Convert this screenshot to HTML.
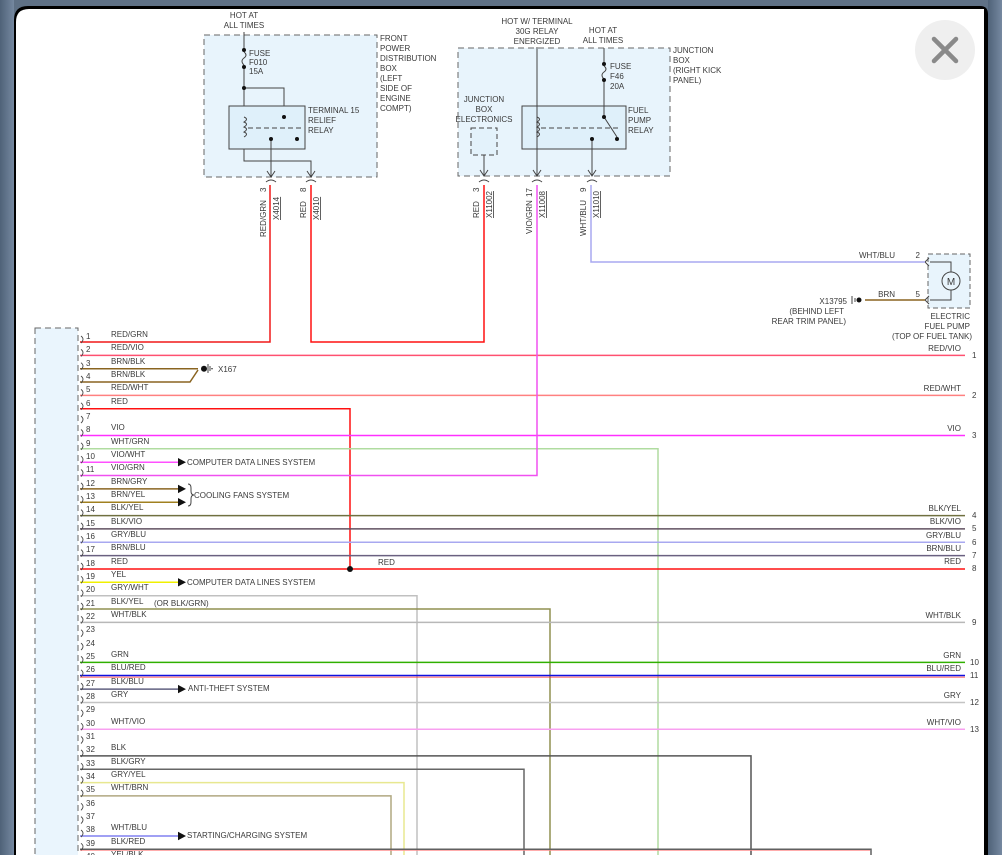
<!DOCTYPE html>
<html><head><meta charset="utf-8"><style>
html,body{margin:0;padding:0;width:1002px;height:855px;overflow:hidden;background:#5f7186;}
svg{display:block}
text{font-family:"Liberation Sans",sans-serif;font-size:8px;fill:#3a3a3a}
</style></head><body>
<svg width="1002" height="855" viewBox="0 0 1002 855" xmlns="http://www.w3.org/2000/svg">
<defs>
<linearGradient id="lg" x1="0" x2="1"><stop offset="0" stop-color="#4f6278"/><stop offset="1" stop-color="#7588a0"/></linearGradient>
</defs>
<rect x="0" y="0" width="14" height="855" fill="url(#lg)"/>
<rect x="988" y="0" width="14" height="855" fill="url(#lg)"/>
<path d="M14,855 V20 Q14,6 28,6 H980 Q988,6 988,14 V855 Z" fill="#000"/>
<path d="M16,855 V22 Q16,9 29,9 H984 V855 Z" fill="#fff"/>
<rect x="984" y="9" width="2" height="846" fill="#000"/>

<circle cx="945" cy="50" r="30" fill="#efefef"/>
<path d="M934,39 L956,61 M956,39 L934,61" stroke="#8a8a8a" stroke-width="4.5" stroke-linecap="round"/>

<rect x="204" y="35" width="173" height="142" fill="#e8f4fc" stroke="#666" stroke-dasharray="6 4"/>
<text x="244" y="18" text-anchor="middle">HOT AT</text>
<text x="244" y="28" text-anchor="middle">ALL TIMES</text>
<g stroke="#444" fill="none" stroke-width="1">
<path d="M244,32 V50 M244,67 V161 H311 V177"/>
<path d="M244,52 q4,3 0,6 q-4,3 0,7"/>
<path d="M244,88 H284 V117 L297,137"/>
<rect x="229" y="106" width="76" height="43" fill="#dff0fa"/>
<path d="M244,117 q5,2 0,5 q5,2 0,5 q5,2 0,5 q5,2 0,5"/>
<path d="M248,128 H302" stroke-dasharray="5 3"/>
<path d="M271,139 V177"/>
<path d="M267,171 L271,177 L275,171 M307,171 L311,177 L315,171"/>
<path d="M266,182 q5,-4 10,0 M306,182 q5,-4 10,0"/>
</g>
<g fill="#111"><circle cx="244" cy="50" r="2"/><circle cx="244" cy="67" r="2"/><circle cx="244" cy="88" r="2"/><circle cx="284" cy="117" r="2"/><circle cx="297" cy="139" r="2"/><circle cx="271" cy="139" r="2"/></g>
<text x="249" y="56">FUSE</text><text x="249" y="65">F010</text><text x="249" y="74">15A</text>
<text x="308" y="113">TERMINAL 15</text><text x="308" y="123">RELIEF</text><text x="308" y="133">RELAY</text>
<text x="380" y="41">FRONT</text><text x="380" y="51">POWER</text><text x="380" y="61">DISTRIBUTION</text><text x="380" y="71">BOX</text><text x="380" y="81">(LEFT</text><text x="380" y="91">SIDE OF</text><text x="380" y="101">ENGINE</text><text x="380" y="111">COMPT)</text>
<g transform="rotate(-90)">
<text x="-192" y="266">3</text><text x="-220" y="279" text-decoration="underline">X4014</text><text x="-237" y="266">RED/GRN</text>
<text x="-192" y="306">8</text><text x="-220" y="319" text-decoration="underline">X4010</text><text x="-218" y="306">RED</text>
<text x="-192" y="479">3</text><text x="-218" y="492" text-decoration="underline">X11002</text><text x="-218" y="479">RED</text>
<text x="-197" y="532">17</text><text x="-218" y="545" text-decoration="underline">X11008</text><text x="-234" y="532">VIO/GRN</text>
<text x="-192" y="586">9</text><text x="-218" y="599" text-decoration="underline">X11010</text><text x="-236" y="586">WHT/BLU</text>
</g>

<rect x="458" y="48" width="212" height="128" fill="#e8f4fc" stroke="#666" stroke-dasharray="6 4"/>
<text x="537" y="24" text-anchor="middle">HOT W/ TERMINAL</text>
<text x="537" y="34" text-anchor="middle">30G RELAY</text>
<text x="537" y="44" text-anchor="middle">ENERGIZED</text>
<text x="603" y="33" text-anchor="middle">HOT AT</text>
<text x="603" y="43" text-anchor="middle">ALL TIMES</text>
<text x="673" y="53">JUNCTION</text><text x="673" y="63">BOX</text><text x="673" y="73">(RIGHT KICK</text><text x="673" y="83">PANEL)</text>
<text x="484" y="102" text-anchor="middle">JUNCTION</text><text x="484" y="112" text-anchor="middle">BOX</text><text x="484" y="122" text-anchor="middle">ELECTRONICS</text>
<g stroke="#444" fill="none" stroke-width="1">
<rect x="471" y="128" width="26" height="27" stroke-dasharray="5 3" fill="#e3f2fb"/>
<path d="M484,155 V176"/>
<rect x="522" y="106" width="104" height="43" fill="#dff0fa"/>
<path d="M537,47 V176"/>
<path d="M537,117 q5,2 0,5 q5,2 0,5 q5,2 0,5 q5,2 0,5"/>
<path d="M541,128 H620" stroke-dasharray="5 3"/>
<path d="M604,48 V64 M604,80 V117 L617,137"/>
<path d="M604,66 q4,3 0,6 q-4,3 0,7"/>
<path d="M592,139 V176"/>
<path d="M480,170 L484,176 L488,170 M533,170 L537,176 L541,170 M588,170 L592,176 L596,170"/>
<path d="M479,182 q5,-4 10,0 M532,182 q5,-4 10,0 M587,182 q5,-4 10,0"/>
</g>
<g fill="#111"><circle cx="604" cy="64" r="2"/><circle cx="604" cy="80" r="2"/><circle cx="604" cy="117" r="2"/><circle cx="617" cy="139" r="2"/><circle cx="592" cy="139" r="2"/></g>
<text x="610" y="69">FUSE</text><text x="610" y="79">F46</text><text x="610" y="89">20A</text>
<text x="628" y="113">FUEL</text><text x="628" y="123">PUMP</text><text x="628" y="133">RELAY</text>

<rect x="928" y="254" width="42" height="54" fill="#e8f4fc" stroke="#666" stroke-dasharray="5 3"/>
<g stroke="#444" fill="none" stroke-width="1">
<path d="M930,262 H951 V272 M951,290 V300 H930"/>
<circle cx="951" cy="281" r="9" fill="#e8f4fc"/>
<path d="M929,258 l-4,4 l4,4 M929,296 l-4,4 l4,4"/>
<path d="M852,296 V304 M855,298 V302"/>
</g>
<text x="951" y="285" text-anchor="middle" style="font-size:10px">M</text>
<circle cx="859" cy="300" r="2.5" fill="#111"/>
<path d="M591,185 V262 H925" stroke="#a8a8f0" stroke-width="1.5" fill="none"/>
<path d="M865,300 H925" stroke="#8a6420" stroke-width="1.5"/>
<text x="895" y="258" text-anchor="end">WHT/BLU</text><text x="920" y="258" text-anchor="end">2</text>
<text x="895" y="297" text-anchor="end">BRN</text><text x="920" y="297" text-anchor="end">5</text>
<text x="847" y="304" text-anchor="end">X13795</text>
<text x="844" y="314" text-anchor="end">(BEHIND LEFT</text>
<text x="846" y="324" text-anchor="end">REAR TRIM PANEL)</text>
<text x="970" y="319" text-anchor="end">ELECTRIC</text>
<text x="970" y="329" text-anchor="end">FUEL PUMP</text>
<text x="972" y="339" text-anchor="end">(TOP OF FUEL TANK)</text>

<rect x="35" y="328" width="43" height="540" fill="#eaf5fd" stroke="#666" stroke-dasharray="6 4"/>

<g fill="none" stroke-width="1.5">
<path d="M311,185 V342 H484 V185" stroke="#ff1010"/>
<path d="M80,342 H270 V185" stroke="#f01818"/>
<path d="M80,355.4 H965" stroke="#ff5070"/>
<path d="M80,368.7 H198" stroke="#8a6420"/>
<path d="M80,382 H190 L198,370" stroke="#8a6420"/>
<path d="M80,395.4 H965" stroke="#ff8080"/>
<path d="M80,408.8 H350 V569" stroke="#ff1010"/>
<path d="M80,435.5 H965" stroke="#ff30ff"/>
<path d="M80,448.8 H658 V855" stroke="#b0dca0"/>
<path d="M80,462.2 H178" stroke="#ff50ff"/>
<path d="M80,475.5 H537 V185" stroke="#f050f0"/>
<path d="M80,488.9 H178" stroke="#8a6420"/>
<path d="M80,502.2 H178" stroke="#a08020"/>
<path d="M80,515.6 H965" stroke="#707040"/>
<path d="M80,528.9 H965" stroke="#605060"/>
<path d="M80,542.3 H965" stroke="#a8a8f0"/>
<path d="M80,555.6 H965" stroke="#6a6080"/>
<path d="M80,569 H965" stroke="#ff1010"/>
<path d="M80,582.3 H178" stroke="#f0f000"/>
<path d="M80,595.7 H417 V855" stroke="#c0c0c0"/>
<path d="M80,609 H550 V855" stroke="#909050"/>
<path d="M80,622.4 H965" stroke="#b8b8b8"/>
<path d="M80,662.4 H965" stroke="#30b000"/>
<path d="M80,675.5 H965" stroke="#1010e0"/>
<path d="M80,689.1 H178" stroke="#606080"/>
<path d="M80,702.5 H965" stroke="#c4c4c4"/>
<path d="M80,729.2 H965" stroke="#f8a0f0"/>
<path d="M80,755.9 H751 V855" stroke="#555"/>
<path d="M80,769.2 H524 V855" stroke="#666"/>
<path d="M80,782.6 H404 V855" stroke="#e8e890"/>
<path d="M80,795.9 H391 V855" stroke="#b0a880"/>
<path d="M80,836 H178" stroke="#8080f0"/>
<path d="M80,849.3 H871 V855" stroke="#606060"/>
</g>
<path d="M80,850.6 H870" stroke="#ff9090" stroke-width="0.8"/>
<path d="M80,677.1 H965" stroke="#ff3030" stroke-width="0.7"/>
<circle cx="350" cy="569" r="3" fill="#111"/>
<circle cx="204" cy="368.7" r="3" fill="#111"/>
<path d="M208,364 V373 M210,366 V371 M213,368.7 H211" stroke="#444"/>
<text x="218" y="372">X167</text>
<g fill="#111">
<path d="M178,458 L186,462.2 L178,466.4Z"/>
<path d="M178,484.7 L186,488.9 L178,493.1Z"/>
<path d="M178,498 L186,502.2 L178,506.4Z"/>
<path d="M178,578.1 L186,582.3 L178,586.5Z"/>
<path d="M178,684.9 L186,689.1 L178,693.3Z"/>
<path d="M178,831.8 L186,836 L178,840.2Z"/>
</g>
<path d="M188,484 q3,0 3,4 v3 q0,4 3,4 q-3,0 -3,4 v3 q0,4 -3,4" stroke="#444" fill="none"/>
<text x="187" y="465">COMPUTER DATA LINES SYSTEM</text>
<text x="194" y="498">COOLING FANS SYSTEM</text>
<text x="187" y="585">COMPUTER DATA LINES SYSTEM</text>
<text x="188" y="691">ANTI-THEFT SYSTEM</text>
<text x="187" y="838">STARTING/CHARGING SYSTEM</text>
<text x="154" y="606">(OR BLK/GRN)</text>
<text x="378" y="565">RED</text>

<g stroke="#444" fill="none" stroke-width="0.9">
<path d="M81,336 q4,3 0,7 M81,349.4 q4,3 0,7 M81,362.7 q4,3 0,7 M81,376 q4,3 0,7 M81,389.4 q4,3 0,7 M81,402.8 q4,3 0,7 M81,416.1 q4,3 0,7 M81,429.5 q4,3 0,7 M81,442.8 q4,3 0,7 M81,456.2 q4,3 0,7 M81,469.5 q4,3 0,7 M81,482.9 q4,3 0,7 M81,496.2 q4,3 0,7 M81,509.6 q4,3 0,7 M81,522.9 q4,3 0,7 M81,536.3 q4,3 0,7 M81,549.6 q4,3 0,7 M81,563 q4,3 0,7 M81,576.3 q4,3 0,7 M81,589.7 q4,3 0,7 M81,603 q4,3 0,7 M81,616.4 q4,3 0,7 M81,629.7 q4,3 0,7 M81,643.1 q4,3 0,7 M81,656.4 q4,3 0,7 M81,669.8 q4,3 0,7 M81,683.1 q4,3 0,7 M81,696.5 q4,3 0,7 M81,709.8 q4,3 0,7 M81,723.2 q4,3 0,7 M81,736.5 q4,3 0,7 M81,749.9 q4,3 0,7 M81,763.2 q4,3 0,7 M81,776.6 q4,3 0,7 M81,789.9 q4,3 0,7 M81,803.3 q4,3 0,7 M81,816.6 q4,3 0,7 M81,830 q4,3 0,7 M81,843.3 q4,3 0,7"/>
</g>
<g>
<text x="86" y="339">1</text><text x="111" y="337">RED/GRN</text>
<text x="86" y="352">2</text><text x="111" y="350">RED/VIO</text>
<text x="86" y="366">3</text><text x="111" y="364">BRN/BLK</text>
<text x="86" y="379">4</text><text x="111" y="377">BRN/BLK</text>
<text x="86" y="392">5</text><text x="111" y="390">RED/WHT</text>
<text x="86" y="406">6</text><text x="111" y="404">RED</text>
<text x="86" y="419">7</text>
<text x="86" y="432">8</text><text x="111" y="430">VIO</text>
<text x="86" y="446">9</text><text x="111" y="444">WHT/GRN</text>
<text x="86" y="459">10</text><text x="111" y="457">VIO/WHT</text>
<text x="86" y="472">11</text><text x="111" y="470">VIO/GRN</text>
<text x="86" y="486">12</text><text x="111" y="484">BRN/GRY</text>
<text x="86" y="499">13</text><text x="111" y="497">BRN/YEL</text>
<text x="86" y="512">14</text><text x="111" y="510">BLK/YEL</text>
<text x="86" y="526">15</text><text x="111" y="524">BLK/VIO</text>
<text x="86" y="539">16</text><text x="111" y="537">GRY/BLU</text>
<text x="86" y="552">17</text><text x="111" y="550">BRN/BLU</text>
<text x="86" y="566">18</text><text x="111" y="564">RED</text>
<text x="86" y="579">19</text><text x="111" y="577">YEL</text>
<text x="86" y="592">20</text><text x="111" y="590">GRY/WHT</text>
<text x="86" y="606">21</text><text x="111" y="604">BLK/YEL</text>
<text x="86" y="619">22</text><text x="111" y="617">WHT/BLK</text>
<text x="86" y="632">23</text>
<text x="86" y="646">24</text>
<text x="86" y="659">25</text><text x="111" y="657">GRN</text>
<text x="86" y="672">26</text><text x="111" y="670">BLU/RED</text>
<text x="86" y="686">27</text><text x="111" y="684">BLK/BLU</text>
<text x="86" y="699">28</text><text x="111" y="697">GRY</text>
<text x="86" y="712">29</text>
<text x="86" y="726">30</text><text x="111" y="724">WHT/VIO</text>
<text x="86" y="739">31</text>
<text x="86" y="752">32</text><text x="111" y="750">BLK</text>
<text x="86" y="766">33</text><text x="111" y="764">BLK/GRY</text>
<text x="86" y="779">34</text><text x="111" y="777">GRY/YEL</text>
<text x="86" y="792">35</text><text x="111" y="790">WHT/BRN</text>
<text x="86" y="806">36</text>
<text x="86" y="819">37</text>
<text x="86" y="832">38</text><text x="111" y="830">WHT/BLU</text>
<text x="86" y="846">39</text><text x="111" y="844">BLK/RED</text>
<text x="86" y="859">40</text><text x="111" y="857">YEL/BLK</text>
</g>
<g text-anchor="end">
<text x="961" y="351">RED/VIO</text>
<text x="961" y="391">RED/WHT</text>
<text x="961" y="431">VIO</text>
<text x="961" y="511">BLK/YEL</text>
<text x="961" y="524">BLK/VIO</text>
<text x="961" y="538">GRY/BLU</text>
<text x="961" y="551">BRN/BLU</text>
<text x="961" y="564">RED</text>
<text x="961" y="618">WHT/BLK</text>
<text x="961" y="658">GRN</text>
<text x="961" y="671">BLU/RED</text>
<text x="961" y="698">GRY</text>
<text x="961" y="725">WHT/VIO</text>
</g>
<g>
<text x="972" y="358">1</text><text x="972" y="398">2</text><text x="972" y="438">3</text>
<text x="972" y="518">4</text><text x="972" y="531">5</text><text x="972" y="545">6</text>
<text x="972" y="558">7</text><text x="972" y="571">8</text><text x="972" y="625">9</text>
<text x="970" y="665">10</text><text x="970" y="678">11</text><text x="970" y="705">12</text><text x="970" y="732">13</text>
</g>
</svg>
</body></html>
